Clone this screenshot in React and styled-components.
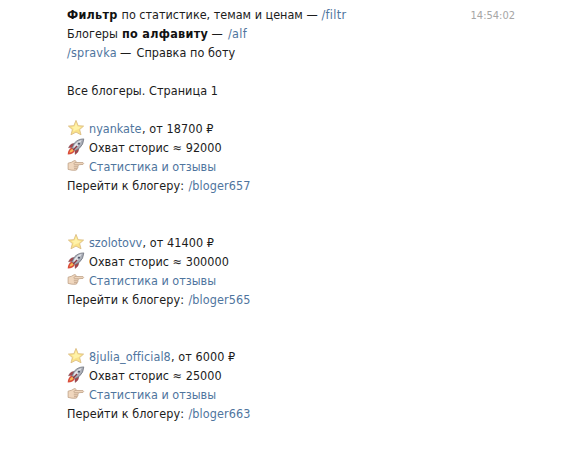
import React from "react";
import styled, { createGlobalStyle } from "styled-components";

const Global = createGlobalStyle`
  body { margin: 0; background: #fff; }
`;
const Page = styled.main`
  display: flex;
  justify-content: space-between;
  align-items: flex-start;
  box-sizing: border-box;
  width: 581px;
  height: 451px;
  padding: 5px 66px 0 67px;
  overflow: hidden;
  font: 12.5px/19px "DejaVu Sans Condensed", "DejaVu Sans", sans-serif;
  color: #1c1c1c;
`;
const Line = styled.div`
  display: flex;
  height: 19px;
  white-space: pre;
`;
const Text = styled.span`
  flex: none;
  width: ${(p) => (p.$w ? `${p.$w}px` : "auto")};
  letter-spacing: ${(p) => p.$ls || 0}px;
`;
const Strong = styled(Text)`
  font-weight: 700;
  color: #111;
`;
const Link = styled(Text).attrs({ as: "a" })`
  color: #4f759e;
`;
const Time = styled.time`
  font-size: 11px;
  line-height: 21px;
  color: #a6a6a6;
`;
const Entry = styled.section`
  margin-bottom: 38px;
`;
const Intro = styled.header`
  margin-bottom: 19px;
`;
const Gap = styled.div`
  height: 19px;
`;
const Icon = styled.svg`
  flex: none;
  width: 18px;
  height: 18px;
  margin-right: 4px;
`;

const Star = () => (
  <Icon viewBox="0 0 18 18">
    <path d="M9 1.4 11.1 6.7 16.6 7.1 12.6 10.6 14 15.8 9 13.1 4 15.8 5.4 10.6 1.4 7.1 6.9 6.7Z"
      fill="#fae388" stroke="#dcbd83" strokeWidth=".9" strokeLinejoin="round" />
    <path d="M9 3.8 10.5 7.6 14 8 11.4 10.2 9 11 6 12.4 6.8 9.8 4.6 8.1 7.6 7.6Z" fill="#fff2a8" />
  </Icon>
);
const Rocket = () => (
  <Icon viewBox="0 0 18 18">
    <path d="M7.4 5.5Q3.4 5.2 1.5 9.8L5.6 9.6ZM11.8 10.6Q11.9 14.4 8.2 16.5L7.8 12.4Z" fill="#a9444a" stroke="#70464e" strokeWidth=".4" />
    <path d="M5.2 9.6Q1.2 10.5.7 16.4Q6.4 16.3 8 12.4Z" fill="#d94c3c" />
    <path d="M5.2 10.8Q3 12 2.4 14.8Q5.4 14.3 6.8 12.2Z" fill="#f8ba58" />
    <path d="M16.8.9Q10.8.9 7.2 5.3L5 9.6 8 12.7 12.4 10.2Q16.5 6.8 16.8.9Z"
      fill="#a9adb6" stroke="#666a76" strokeWidth=".7" />
    <path d="M14.7 1.9Q10.3 3 7.8 6.6L6.4 9.2 8 10.4Q12.4 7 14.7 1.9Z" fill="#e5e7eb" />
    <circle cx="12" cy="5.7" r="1.5" fill="#505668" stroke="#d9dce2" strokeWidth=".6" />
    <path d="m6.2 12 3.8-4" stroke="#8d3843" strokeWidth="1.3" />
  </Icon>
);
const Hand = () => (
  <Icon viewBox="0 0 18 18">
    <path d="M1.1 6.2 4.4 5.3 7.2 3.7Q8.7 3.3 9 4.4L8.4 5.5 16 5.6Q17.3 6.5 16 7.4L10.8 7.8Q12 8.8 10.8 9.8 11.4 11.1 10.1 11.7 10.1 13.2 8.4 13.3L4.8 13.2 1.1 12.4Z"
      fill="#f0d7be" stroke="#bea187" strokeWidth=".8" strokeLinejoin="round" />
    <path d="M6.9 7.8H10.8M6.8 9.8H10.6M7 11.7H10M8.4 5.6 6.5 6.6" fill="none" stroke="#b1937a" strokeWidth=".7" />
  </Icon>
);

const bloggers = [
  { name: "nyankate", nameWidth: 53, price: "18700", reach: "92000", id: "657" },
  { name: "szolotovv", nameWidth: 53.5, price: "41400", reach: "300000", id: "565" },
  { name: "8julia_official8", nameWidth: 82, spacing: 0.08, price: "6000", reach: "25000", id: "663" },
];

export default function App() {
  return (
    <>
      <Global />
      <Page>
        <div>
          <Intro>
            <Line>
              <Strong $w={51} $ls={0.25}>Фильтр</Strong>
              <Text $w={203.5}> по статистике, темам и ценам — </Text>
              <Link $ls={0.3}>/filtr</Link>
            </Line>
            <Line>
              <Text $w={55} $ls={0.05}>Блогеры </Text>
              <Strong $w={86} $ls={0.3}>по алфавиту</Strong>
              <Text $w={20}> — </Text>
              <Link $ls={0.3}>/alf</Link>
            </Line>
            <Line>
              <Link $w={49.5} $ls={0.2}>/spravka</Link>
              <Text $w={20}> — </Text>
              <Text $ls={0.05}>Справка по боту</Text>
            </Line>
            <Gap />
            <Line><Text $ls={0.05}>Все блогеры. Страница 1</Text></Line>
          </Intro>
          {bloggers.map((b) => (
            <Entry key={b.id}>
              <Line>
                <Star />
                <Link $w={b.nameWidth} $ls={b.spacing}>{b.name}</Link>
                <Text $ls={0.07}>, от {b.price} ₽</Text>
              </Line>
              <Line><Rocket /><Text $ls={0.05}>Охват сторис ≈ {b.reach}</Text></Line>
              <Line><Hand /><Link>Статистика и отзывы</Link></Line>
              <Line>
                <Text $w={121.5} $ls={0.06}>Перейти к блогеру: </Text>
                <Link $ls={0.08}>/bloger{b.id}</Link>
              </Line>
            </Entry>
          ))}
        </div>
        <Time>14:54:02</Time>
      </Page>
    </>
  );
}
